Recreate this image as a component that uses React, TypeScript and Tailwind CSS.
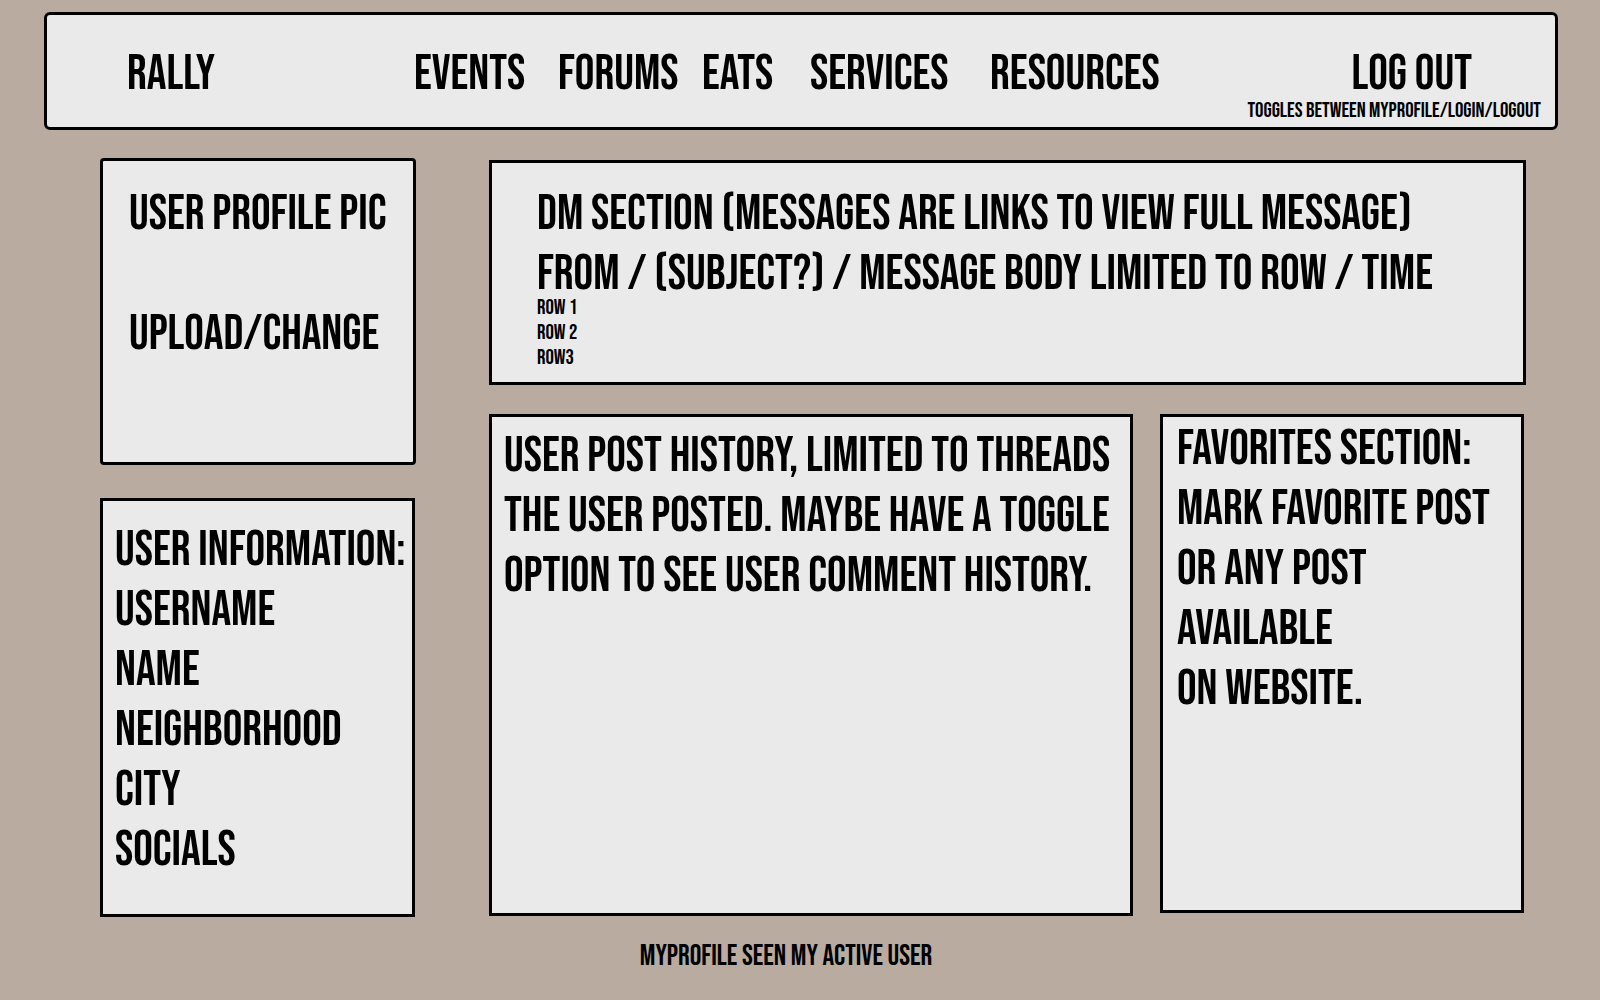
import type { ReactNode } from "react";

const navItems = ["EVENTS", "FORUMS", "EATS", "SERVICES", "RESOURCES"];
const messages = ["ROW 1", "ROW 2", "ROW3"];
const userFields = ["USERNAME", "NAME", "NEIGHBORHOOD", "CITY", "SOCIALS"];

function Panel({ className, children }: { className: string; children: ReactNode }) {
  return (
    <section className={`border-3 border-black bg-[#eaeaea] ${className}`}>
      {children}
    </section>
  );
}

function Header() {
  return (
    <header className="ml-11 mr-[42px] flex min-h-[118px] justify-between rounded-md border-3 border-black bg-[#eaeaea] pt-[30px] pl-20 pr-3.5">
      <a href="#rally" className="w-[287px] self-start">
        RALLY
      </a>
      <nav aria-label="Main" className="grid flex-1 grid-cols-[144px_144px_108px_180px_168px] self-start">
        {navItems.map((item) => (
          <a key={item} href={`#${item.toLowerCase()}`}>
            {item}
          </a>
        ))}
      </nav>
      <div className="flex flex-col items-end">
        <button type="button" className="mr-[69px] whitespace-nowrap leading-[60px]">
          LOG OUT
        </button>
        <p className="-mt-[7px] whitespace-nowrap text-[21px] leading-[25px]">
          TOGGLES BETWEEN MYPROFILE/LOGIN/LOGOUT
        </p>
      </div>
    </header>
  );
}

export default function App() {
  return (
    <div className="flex min-h-screen flex-col bg-[#b9aba0] pt-3 font-['Bebas_Neue','Roboto_Condensed','Liberation_Sans',sans-serif] text-[49px] leading-[60px] font-normal text-black">
      <Header />

      <main className="mt-7 ml-[100px] mr-[74px] grid grid-cols-[316fr_1037fr] gap-[73px]">
        <div className="flex min-w-0 flex-col gap-[33px]">
          <Panel className="min-h-[307px] rounded-sm pt-6 pl-[26px]">
            <h2>USER PROFILE PIC</h2>
            <button type="button" className="mt-[60px]">
              UPLOAD/CHANGE
            </button>
          </Panel>
          <Panel className="mr-px min-h-[419px] pt-5 pl-3">
            <h2 className="whitespace-nowrap">USER INFORMATION:</h2>
            <ul>
              {userFields.map((field) => (
                <li key={field}>{field}</li>
              ))}
            </ul>
          </Panel>
        </div>

        <div className="flex min-w-0 flex-col gap-[29px] pt-0.5">
          <Panel className="min-h-[225px] pt-[22px] pl-[45px]">
            <h2>DM SECTION (MESSAGES ARE LINKS TO VIEW FULL MESSAGE)</h2>
            <p>FROM / (SUBJECT?) / MESSAGE BODY LIMITED TO ROW / TIME</p>
            <ul className="-mt-2.5 text-[21px] leading-[25px]">
              {messages.map((message) => (
                <li key={message}>
                  <a href="#message">{message}</a>
                </li>
              ))}
            </ul>
          </Panel>

          <div className="mr-0.5 grid grid-cols-[644fr_364fr] items-start gap-[27px]">
            <Panel className="min-h-[502px] pt-2.5 pl-3">
              <p>
                USER POST HISTORY, LIMITED TO THREADS
                <br />
                THE USER POSTED. MAYBE HAVE A TOGGLE
                <br />
                OPTION TO SEE USER COMMENT HISTORY.
              </p>
            </Panel>
            <Panel className="min-h-[499px] pt-[3px] pl-3.5">
              <h2>FAVORITES SECTION:</h2>
              <p>
                MARK FAVORITE POST
                <br />
                OR ANY POST
                <br />
                AVAILABLE
                <br />
                ON WEBSITE.
              </p>
            </Panel>
          </div>
        </div>
      </main>

      <footer className="mt-2.5 pr-7 text-center text-[29px] leading-[60px]">
        MYPROFILE SEEN MY ACTIVE USER
      </footer>
    </div>
  );
}
